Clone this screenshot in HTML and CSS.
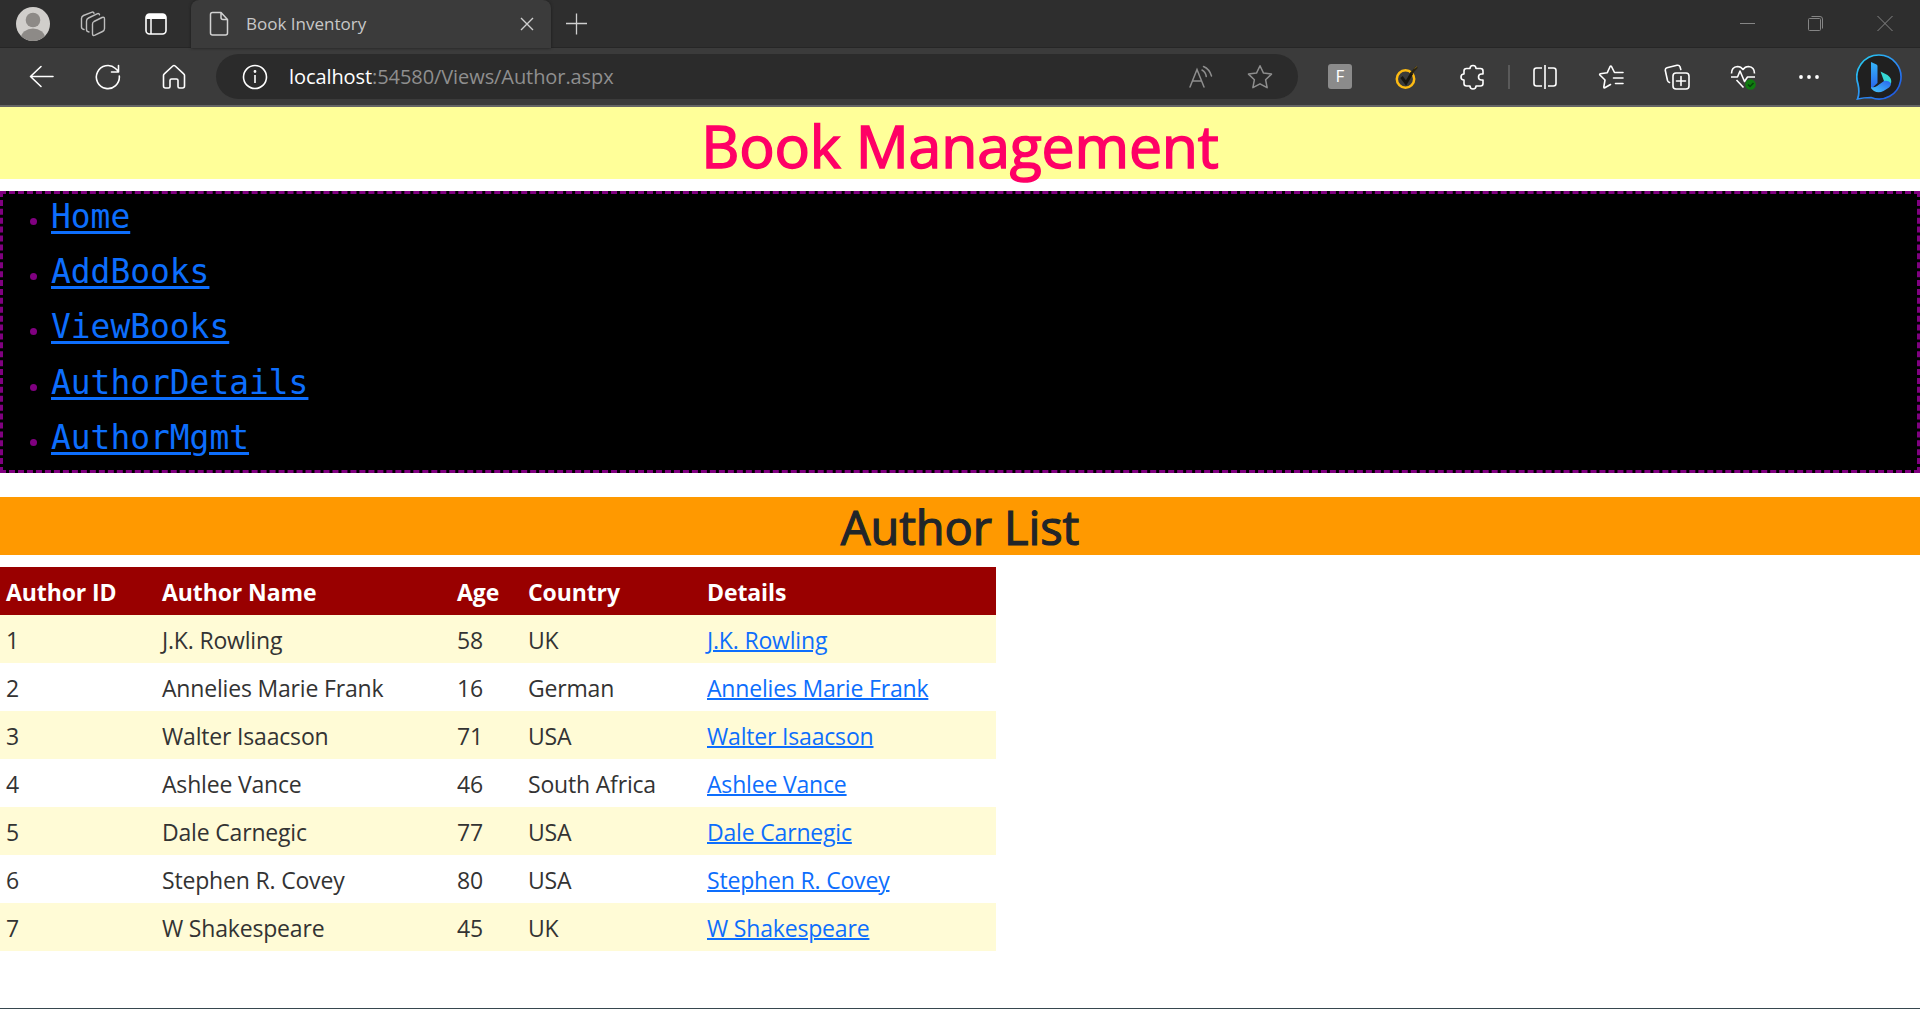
FILE: index.html
```html
<!DOCTYPE html>
<html lang="en">
<head>
<meta charset="utf-8">
<title>Book Inventory</title>
<link rel="stylesheet" href="styles.css">
</head>
<body>
<header class="browser">
  <div class="tabstrip">
    <div class="tab-tools">
      <svg class="avatar" width="34" height="34" viewBox="0 0 34 34"><defs><clipPath id="disc"><circle cx="17" cy="17" r="17"/></clipPath></defs><g clip-path="url(#disc)"><rect width="34" height="34" fill="#d0cecb"/><circle cx="17" cy="13" r="7.3" fill="#8d8a87"/><ellipse cx="17" cy="31" rx="12" ry="9.5" fill="#8d8a87"/></g></svg>
      <svg class="workspaces" width="26" height="26" viewBox="0 0 26 26" fill="none" stroke="#bdbdbd" stroke-width="1.4" stroke-linejoin="round" stroke-linecap="round"><path d="M14 10.500l8-4q2.500-1 2.500 1.500v9.500q0 2-2 3l-7.500 3.700q-2.500 1-2.500-1.500v-9.700q0-1.700 1.500-2.500z"/><path d="M9 21q-2.500-.3-2.500-2.500v-8.500q0-2 2-3l8.500-4.200q2-.8 2.500 1"/><path d="M4 18.500q-2.500-.5-2.500-2.500V7.500q0-2 2-3l8-3.200q2-.8 2.500 1"/></svg>
      <svg class="panes" width="22" height="22" viewBox="0 0 22 22"><rect x="1" y="1" width="20" height="20" rx="3.500" fill="none" stroke="#fff" stroke-width="1.600"/><path d="M1 6V4q0-3 3-3h14q3 0 3 3v2z" fill="#fff"/><path d="M6 6v15" stroke="#fff" stroke-width="1.500"/></svg>
    </div>
    <div class="tab">
      <svg width="20" height="26" viewBox="0 0 20 26" fill="none" stroke="#d2d2d2" stroke-width="1.500" stroke-linejoin="round"><path d="M3.500 1.500h8.500l6.500 7v13.500q0 2-2 2h-13q-2 0-2-2v-18.500q0-2 2-2zM12 1.500v5q0 2 2 2h4.500"/></svg>
      <span class="tab-title">Book Inventory</span>
      <svg class="tab-close" width="14" height="14" viewBox="0 0 14 14" stroke="#cfcfcf" stroke-width="1.400"><path d="M1 1l12 12M13 1L1 13"/></svg>
    </div>
    <svg class="new-tab" width="22" height="22" viewBox="0 0 22 22" stroke="#cfcfcf" stroke-width="1.300"><path d="M10.500 .5v21M0 10.500h21"/></svg>
    <div class="window-buttons">
      <svg width="15" height="16" viewBox="0 0 15 16" stroke="#858585"><path d="M0 7.500h15"/></svg>
      <svg width="16" height="16" viewBox="0 0 16 16" fill="none" stroke="#858585"><rect x=".5" y="2.500" width="12" height="12" rx="1"/><path d="M3.500 .5H12q2.500 0 2.500 2.500v9.500"/></svg>
      <svg width="16" height="16" viewBox="0 0 16 16" stroke="#858585"><path d="M.5 0l15 15M15.500 0l-15 15"/></svg>
    </div>
  </div>
  <div class="toolbar">
    <div class="nav-buttons">
      <svg width="26" height="26" viewBox="0 0 26 26" fill="none" stroke="#fff" stroke-width="1.600" stroke-linecap="round" stroke-linejoin="round"><path d="M24 12.500H1.500M12 2.500L1.500 12.500L12 22.500"/></svg>
      <svg width="26" height="26" viewBox="0 0 26 26" fill="none" stroke="#fff" stroke-width="1.600" stroke-linecap="round" stroke-linejoin="round"><path d="M24.300 12A11.500 11.500 0 1 1 20.500 4.500l2.500 2.500M23.500 1.500V8H16.500"/></svg>
      <svg width="26" height="26" viewBox="0 0 26 26" fill="none" stroke="#fff" stroke-width="1.600" stroke-linejoin="round"><path d="M2.500 11.500q0-1 .8-1.700L11.800 2q1.200-1 2.400 0l8.500 7.800q.8.700.8 1.700V22q0 2-2 2h-3q-1.500 0-1.500-1.500v-6q0-1.500-1.500-1.500h-5q-1.500 0-1.500 1.500v6q0 1.500-1.500 1.500h-3q-2 0-2-2z"/></svg>
    </div>
    <div class="address">
      <svg width="26" height="26" viewBox="0 0 26 26" fill="none" stroke="#fff" stroke-width="1.600"><circle cx="13" cy="13" r="11.500"/><path d="M13 11v8"/><circle cx="13" cy="7.500" r=".6" fill="#fff"/></svg>
      <span class="url"><b>localhost</b>:54580/Views/Author.aspx</span>
      <svg class="read" width="24" height="24" viewBox="0 0 24 24" fill="none" stroke="#8e8e8e" stroke-width="1.500" stroke-linecap="round"><path d="M1 22L8 4.500L15 22M3.500 16h9"/><path d="M13 5q3.500 1.800 4.300 6.500M14.500 1.500q6 2.500 8 9.500"/></svg>
      <svg class="star" width="26" height="26" viewBox="0 0 26 26" fill="none" stroke="#8e8e8e" stroke-width="1.500" stroke-linejoin="round"><path d="M13 1.800l3.500 7.300 8 1-5.900 5.600 1.500 8-7.100-3.900-7.100 3.900 1.500-8L1.500 10.100l8-1z"/></svg>
    </div>
    <div class="actions">
      <span class="ext-f">F</span>
      <svg width="26" height="26" viewBox="0 0 26 26" fill="none"><circle cx="11.500" cy="15" r="8.700" stroke="#fdbb13" stroke-width="2.500"/><path d="M7.500 13l4.500 6L18 9" stroke="#17150f" stroke-width="3"/><path d="M17 9.500L23 3" stroke="#2a2410" stroke-width="2.500"/><path d="M20.500 4.500L23 2.500" stroke="#7d611b"/></svg>
      <svg width="26" height="26" viewBox="0 0 26 26" fill="none" stroke="#fff" stroke-width="1.600" stroke-linejoin="round"><path d="M6.500 4.500H10a3 3 0 0 1 6 0h4.500q2.500 0 2.500 2.500v3h-1.500a3 3 0 0 0 0 6H23v3.500q0 2.500-2.500 2.500H16a3 3 0 0 1-6 0H6.500Q4 22 4 19.500V16a3 3 0 0 1 0-6V7q0-2.500 2.500-2.500z"/></svg>
      <i class="divider"></i>
      <svg width="26" height="26" viewBox="0 0 26 26" fill="none" stroke="#fff" stroke-width="1.600"><path d="M10 4H4.500Q2 4 2 6.500v13Q2 22 4.500 22H10M16 4h5.500Q24 4 24 6.500v13q0 2.500-2.500 2.500H16M13 1v24"/></svg>
      <svg width="26" height="26" viewBox="0 0 26 26" fill="none" stroke="#fff" stroke-width="1.600" stroke-linejoin="round" stroke-linecap="round"><path d="M16.500 8.500L13.500 2.500q-.7-1-1.400 0L9.300 8.700l-7 1.100q-1 .3-.4 1.200L7 16l-1.200 7q0 1.200 1 .8L12.500 20.500M17.500 8.500h7.500M15.500 14h9.500M17.500 19.500h7.500"/></svg>
      <svg width="26" height="26" viewBox="0 0 26 26" fill="none" stroke="#fff" stroke-width="1.600" stroke-linecap="round"><rect x="9" y="9" width="16" height="16" rx="3"/><path d="M17 12.500v9M12.500 17h9M5.500 18.500Q4 18 3.500 16.500L1.300 6.500Q1 4.200 3 3.700L13 1.300q2.200-.5 3 1.500l.8 2.700"/></svg>
      <svg width="26" height="26" viewBox="0 0 26 26" fill="none" stroke="#fff" stroke-width="1.600" stroke-linejoin="round"><path d="M1.500 9.500Q1.500 3 7.500 2.500q3.500 0 5.500 3Q15 2.500 18.500 2.500q6 .5 6 7M1 13h6.500l2.500-6 4.500 10.500 3-4.500h7.500M6.500 16l7 7.500"/><circle cx="20.500" cy="20.500" r="5.300" fill="#107c10" stroke="none"/><path d="M18 20.500l2 2 3.500-3.500" stroke="#07420b"/></svg>
      <svg width="26" height="26" viewBox="0 0 26 26" fill="#fff"><circle cx="5" cy="13" r="1.900"/><circle cx="13" cy="13" r="1.900"/><circle cx="21" cy="13" r="1.900"/></svg>
    </div>
    <svg class="bing" width="46" height="46" viewBox="0 0 46 46"><defs><linearGradient id="ring" x1="0" y1="0" x2="1" y2="1"><stop offset="0" stop-color="#25d5f0"/><stop offset=".5" stop-color="#2c91f5"/><stop offset="1" stop-color="#1b4be0"/></linearGradient><linearGradient id="stem" x1="0" y1="0" x2="0" y2="1"><stop offset="0" stop-color="#36b5f8"/><stop offset="1" stop-color="#2864ed"/></linearGradient><linearGradient id="foot" x1="0" y1="1" x2="1" y2="0"><stop offset="0" stop-color="#45c8fb"/><stop offset="1" stop-color="#2864ed"/></linearGradient></defs><path d="M23 1a22 22 0 1 1-8 42.500Q8 43.500 1.500 45 4 39 2 30A22 22 0 0 1 23 1z" fill="#202020" stroke="url(#ring)" stroke-width="1.700"/><path d="M15 8l5.500 2.500q1 .5 1 1.500v17l-6.500 6z" fill="url(#stem)"/><path d="M24.500 17.500l7 3.500q5 3.500 3.500 9l-7-3z" fill="#35d8d4"/><path d="M15 33q3 1 6-1l7-5q5-1 7 2.500 0 3-3.500 5l-4 2.500q-5 2.500-9.500 0-3-1.500-3-4z" fill="url(#foot)"/></svg>
  </div>
</header>
<main class="page">
  <h1 class="site-title">Book Management</h1>
  <ul class="menu">
    <li><a href="#">Home</a></li>
    <li><a href="#">AddBooks</a></li>
    <li><a href="#">ViewBooks</a></li>
    <li><a href="#">AuthorDetails</a></li>
    <li><a href="#">AuthorMgmt</a></li>
  </ul>
  <h2 class="list-title">Author List</h2>
  <table class="authors">
    <colgroup><col class="c-id"><col class="c-name"><col class="c-age"><col class="c-country"><col class="c-details"></colgroup>
    <thead><tr><th>Author ID</th><th>Author Name</th><th>Age</th><th>Country</th><th>Details</th></tr></thead>
    <tbody>
      <tr><td>1</td><td>J.K. Rowling</td><td>58</td><td>UK</td><td><a href="#">J.K. Rowling</a></td></tr>
      <tr><td>2</td><td>Annelies Marie Frank</td><td>16</td><td>German</td><td><a href="#">Annelies Marie Frank</a></td></tr>
      <tr><td>3</td><td>Walter Isaacson</td><td>71</td><td>USA</td><td><a href="#">Walter Isaacson</a></td></tr>
      <tr><td>4</td><td>Ashlee Vance</td><td>46</td><td>South Africa</td><td><a href="#">Ashlee Vance</a></td></tr>
      <tr><td>5</td><td>Dale Carnegic</td><td>77</td><td>USA</td><td><a href="#">Dale Carnegic</a></td></tr>
      <tr><td>6</td><td>Stephen R. Covey</td><td>80</td><td>USA</td><td><a href="#">Stephen R. Covey</a></td></tr>
      <tr><td>7</td><td>W Shakespeare</td><td>45</td><td>UK</td><td><a href="#">W Shakespeare</a></td></tr>
    </tbody>
  </table>
</main>
</body>
</html>
```

FILE: styles.css
```css
* { box-sizing: border-box; }
body {
  margin: 0;
  height: 1009px;
  overflow: hidden;
  display: flex;
  flex-direction: column;
  background: #fff;
  border-bottom: 1px solid #37474f;
  color: #212529;
  font-family: "Open Sans", "Noto Sans", sans-serif;
}
svg { display: block; flex: none; }

.browser { flex: none; height: 107px; background: #3b3b3b; border-bottom: 2px solid #656565; }
.tabstrip { display: flex; align-items: center; height: 48px; background: #2e2e2e; box-shadow: inset 0 -1px #262626; }
.tab-tools { display: flex; align-items: center; width: 191px; padding-left: 16px; }
.workspaces { margin-left: 30px; }
.panes { margin-left: 39px; }
.tab {
  display: flex;
  align-items: center;
  width: 360px;
  height: 48px;
  padding: 0 17px 0 18px;
  background: #3b3b3b;
  border-radius: 8px 8px 0 0;
  box-shadow: 0 0 3px #1c1c1c;
}
.tab-title { margin-left: 17px; padding-bottom: 2px; color: #c8c8c8; font-size: 17px; letter-spacing: 0; }
.tab-close { margin-left: auto; }
.new-tab { margin-left: 15px; }
.window-buttons { display: flex; gap: 53px; margin-left: auto; padding-right: 27px; }

.toolbar { display: flex; align-items: center; height: 57px; background: #3b3b3b; }
.nav-buttons { display: flex; gap: 40px; width: 216px; padding-left: 29px; }
.address {
  display: flex;
  align-items: center;
  width: 1082px;
  height: 45px;
  padding: 0 25px 0 26px;
  border-radius: 23px;
  background: #2b2b2b;
}
.url { margin-left: 21px; padding-bottom: 1px; color: #8f8f8f; font-size: 20px; letter-spacing: -0.08px; }
.url b { color: #fff; font-weight: 400; }
.read { margin-left: auto; }
.star { margin-left: 34px; }
.actions { display: flex; align-items: center; gap: 40px; margin-left: 30px; }
.ext-f {
  width: 24px;
  height: 25px;
  margin-right: 2px;
  border-radius: 3px;
  background: #8b8b8b;
  color: #fff;
  font-size: 17px;
  line-height: 24px;
  text-align: center;
}
.divider { width: 2px; height: 24px; margin: 0 -18px; background: #5a5a5a; }
.bing { margin-left: auto; margin-right: 18px; }

/* a thin outline thickens the regular face to a medium weight */
.site-title {
  margin: 0 0 12px;
  height: 72px;
  background: #ff9;
  color: #f06;
  font-size: 59px;
  font-weight: 400;
  line-height: 76px;
  letter-spacing: -0.2px;
  text-align: center;
  -webkit-text-stroke: 1.5px #f06;
}
.menu {
  margin: 0 0 24px;
  height: 282px;
  padding: 0 0 0 48px;
  border: 3px dashed purple;
  background: #000;
  color: purple;
  font-size: 21px;
}
.menu li { height: 55.2px; line-height: 52px; }
.menu a {
  color: #0d6efd;
  font-family: "DejaVu Sans Mono", monospace;
  font-size: 32.9px;
  line-height: 1;
  text-decoration-thickness: 3px;
  text-underline-offset: 3px;
}
.list-title {
  margin: 0 0 12px;
  height: 58px;
  background: #f90;
  font-size: 47px;
  font-weight: 400;
  line-height: 60px;
  letter-spacing: -0.1px;
  text-align: center;
  -webkit-text-stroke: 1.2px #212529;
}
.authors { width: 996px; table-layout: fixed; border-collapse: collapse; color: #333; font-size: 23px; }
.c-id { width: 156px; }
.c-name { width: 295px; }
.c-age { width: 71px; }
.c-country { width: 179px; }
.c-details { width: 295px; }
.authors th, .authors td { height: 48px; padding: 2px 0 0 6px; line-height: 36px; text-align: left; white-space: nowrap; letter-spacing: -0.18px; }
.authors th { background: #900; color: #fff; font-weight: 700; letter-spacing: -0.1px; }
.authors tbody tr:nth-child(odd) { background: #fffbd6; }
.authors a { color: #0d6efd; text-decoration-thickness: 2px; }
```
